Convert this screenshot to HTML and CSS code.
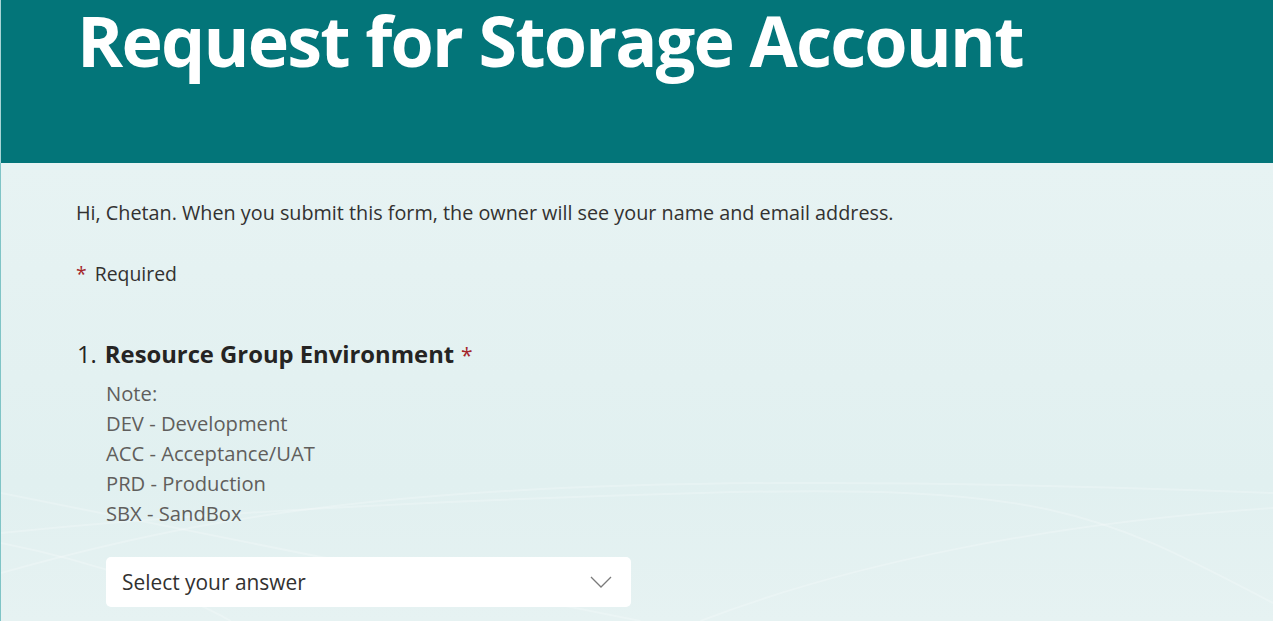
FILE: index.html
```html
<!DOCTYPE html>
<html lang="en">
<head>
<meta charset="utf-8">
<title>Request for Storage Account</title>
<link rel="stylesheet" href="styles.css">
</head>
<body>
<div class="page">
  <header class="banner">
    <h1 class="title">Request for Storage Account</h1>
  </header>
  <main class="form">
    <svg class="waves" viewBox="0 0 1273 458" preserveAspectRatio="none" aria-hidden="true">
      <path d="M0 370 C 150 355, 350 340, 700 330 S 1100 350, 1273 440" />
      <path d="M0 330 C 250 380, 500 430, 640 458" />
      <path d="M0 410 C 250 340, 500 300, 1273 330" />
      <path d="M700 458 C 850 400, 1050 360, 1273 345" />
      <path d="M0 380 C 100 400, 180 430, 230 458" />
    </svg>
    <p class="intro">Hi, Chetan. When you submit this form, the owner will see your name and email address.</p>
    <p class="required"><span class="star">*</span> Required</p>
    <section class="question">
      <div class="q-head">
        <span class="q-num">1.</span>
        <span class="q-title">Resource Group Environment</span>
        <span class="star">*</span>
      </div>
      <div class="q-note">
        <div>Note:</div>
        <div>DEV - Development</div>
        <div>ACC - Acceptance/UAT</div>
        <div>PRD - Production</div>
        <div>SBX - SandBox</div>
      </div>
      <div class="select">
        <span class="select-text">Select your answer</span>
        <svg class="chevron" width="22" height="12" viewBox="0 0 22 12" aria-hidden="true">
          <path d="M1 1 L11 11 L21 1" />
        </svg>
      </div>
    </section>
  </main>
</div>
</body>
</html>
```

FILE: styles.css
```css
html, body {
  margin: 0;
  padding: 0;
  height: 100%;
  overflow: hidden;
}

body {
  font-family: "Open Sans", "Noto Sans", sans-serif;
  background: #e5f1f2;
}

.page {
  min-height: 100%;
  border-left: 1px solid #7fc4c6;
}

.banner {
  height: 163px;
  background: #037579;
  border-left: 1px solid #a8d4d6;
  margin-left: -1px;
  box-sizing: border-box;
  padding-left: 76px;
  overflow: hidden;
}

.title {
  margin: 0;
  margin-top: -10px;
  color: #ffffff;
  font-size: 70px;
  font-weight: 700;
  line-height: 100px;
  letter-spacing: -1.8px;
}

.form {
  position: relative;
  min-height: 458px;
  padding: 0 0 0 75px;
  background: linear-gradient(180deg, #e7f3f3 0%, #e1f0f0 70%, #e6f2f2 100%);
  overflow: hidden;
}

.waves {
  position: absolute;
  left: 0;
  top: 0;
  width: 100%;
  height: 100%;
  pointer-events: none;
}

.waves path {
  fill: none;
  stroke: #ffffff;
  stroke-opacity: 0.22;
  stroke-width: 2;
}

.intro {
  position: relative;
  margin: 0;
  padding-top: 38px;
  font-size: 19.8px;
  line-height: 24px;
  color: #323130;
}

.required {
  position: relative;
  margin: 37px 0 0 0;
  font-size: 19.4px;
  line-height: 24px;
  color: #323130;
}

.star {
  color: #a4262c;
}

.required .star {
  margin-right: 3px;
}

.question {
  position: relative;
  margin-top: 53px;
}

.q-head {
  display: flex;
  align-items: baseline;
  gap: 9px;
  font-size: 23.8px;
  line-height: 30px;
  color: #252423;
}

.q-num {
  font-weight: 400;
  margin-left: 1px;
}

.q-title {
  font-weight: 700;
  margin-left: -1px;
}

.q-head .star {
  font-size: 21px;
  margin-left: -2px;
}

.q-note {
  margin-top: 8px;
  padding-left: 30px;
  font-size: 20.2px;
  line-height: 30px;
  color: #605e5c;
}

.select {
  margin: 29px 0 0 30px;
  width: 525px;
  height: 50px;
  box-sizing: border-box;
  background: #ffffff;
  border-radius: 5px;
  display: flex;
  align-items: center;
  justify-content: space-between;
  padding: 0 19px 0 16px;
}

.select-text {
  font-size: 20.9px;
  color: #323130;
}

.chevron path {
  fill: none;
  stroke: #7a7a7a;
  stroke-width: 1.3;
}
```
